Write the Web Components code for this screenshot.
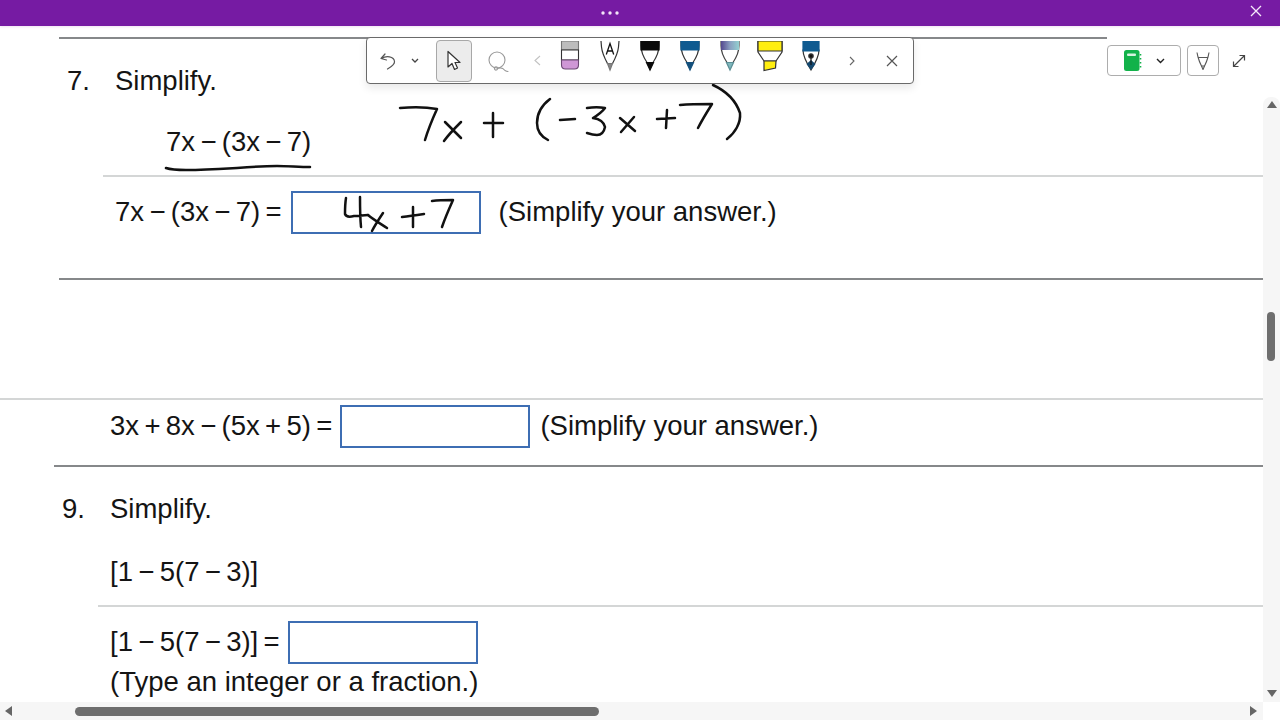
<!DOCTYPE html>
<html lang="en"><head><meta charset="utf-8"><title>Worksheet</title>
<style>html,body{margin:0;padding:0;background:#fff;overflow:hidden}</style></head>
<body>
<app-window>
  <q-rule tone="dark" style="--left:59px;--width:1048px"></q-rule>
  <q-head num="7." style="--left:67px">Simplify.</q-head>
  <q-row style="--left:166px;--h:42px;--after:12px"><math-text>7x − (3x − 7)</math-text></q-row>
  <q-rule style="--left:103px"></q-rule>
  <q-row style="--left:115px;--h:70px;--after:31px;--g1:9px;--g2:18px"><math-text>7x − (3x − 7) =</math-text><answer-box></answer-box><span>(Simplify your answer.)</span></q-row>
  <q-rule tone="dark" style="--left:59px;--after:118px"></q-rule>
  <q-rule style="--left:0px"></q-rule>
  <q-row style="--left:110px;--h:52px;--after:13px;--g1:8px;--g2:10px"><math-text>3x + 8x − (5x + 5) =</math-text><answer-box></answer-box><span>(Simplify your answer.)</span></q-row>
  <q-rule tone="dark" style="--left:54px"></q-rule>
  <q-head num="9." style="--left:62px">Simplify.</q-head>
  <q-row style="--left:110px;--h:42px;--before:2px;--after:12px"><math-text>[1 − 5(7 − 3)]</math-text></q-row>
  <q-rule style="--left:98px"></q-rule>
  <q-row style="--left:110px;--h:40px;--before:15px;--g1:8px"><math-text>[1 − 5(7 − 3)] =</math-text><answer-box></answer-box></q-row>
  <q-row style="--left:110px;--h:40px"><span>(Type an integer or a fraction.)</span></q-row>
</app-window>

<template id="t-app">
<style>
:host{display:grid;grid-template-rows:26px 1fr;width:1280px;height:720px;position:relative;overflow:hidden;background:#fff;
 font:27.5px "Liberation Sans",Arial,sans-serif;color:#141414}
.body{display:grid;grid-template-columns:1fr 17px;grid-template-rows:1fr 18px;min-height:0}
.sheet{overflow:hidden;padding-top:11px;min-height:0}
.corner{background:#fff}
</style>
<title-bar></title-bar>
<div class="body">
  <div class="sheet"><slot></slot></div>
  <v-scroll></v-scroll>
  <h-scroll></h-scroll>
  <div class="corner"></div>
</div>
<ink-layer></ink-layer>
<pen-toolbar></pen-toolbar>
<side-tools></side-tools>
</template>

<template id="t-title">
<style>
:host{display:flex;align-items:center;background:#761ba3;height:26px;box-shadow:0 1px 2px rgba(120,30,160,.12);position:relative;z-index:2}
.dots{flex:1;display:flex;justify-content:center;padding-left:0}
.x{width:60px;display:flex;justify-content:center;padding-left:12px;box-sizing:border-box;margin-top:-5px}
svg{display:block}
</style>
<div class="dots"><svg width="20" height="4" viewBox="0 0 20 4" fill="#f3e6f8"><circle cx="3" cy="2" r="1.7"/><circle cx="10" cy="2" r="1.7"/><circle cx="17" cy="2" r="1.7"/></svg></div>
<div class="x"><svg width="12" height="12" viewBox="0 0 12 12" stroke="#f5e9fa" stroke-width="1.3" fill="none"><path d="M1 1l10 10M11 1L1 11"/></svg></div>
</template>

<template id="t-rule">
<style>
:host{display:block;height:2px;margin-left:var(--left,0);width:var(--width,auto);margin-bottom:var(--after,0);background:#d4d6d6}
:host([tone=dark]){background:#86888a}
</style>
</template>

<template id="t-head">
<style>
:host{display:flex;align-items:center;box-sizing:border-box;height:82px;padding-top:2px;padding-left:var(--left,0)}
.n{width:48px}
</style>
<span class="n"></span><slot></slot>
</template>

<template id="t-row">
<style>
:host{display:flex;align-items:center;height:var(--h,40px);padding-left:var(--left,0);margin-top:var(--before,0);margin-bottom:var(--after,0);white-space:nowrap}
::slotted(answer-box){margin-left:var(--g1,8px);margin-right:var(--g2,10px)}
</style>
<slot></slot>
</template>

<template id="t-math">
<style>:host{display:inline-block;white-space:nowrap;word-spacing:-2.3px}</style>
<slot></slot>
</template>

<template id="t-box">
<style>:host{display:block;flex:none;width:190px;height:43px;box-sizing:border-box;border:2px solid #3e6eb3;background:#fff}</style>
</template>

<template id="t-ink">
<style>:host{position:absolute;left:0;top:0;width:1280px;height:720px;pointer-events:none}svg{display:block}</style>
<svg width="1280" height="720" viewBox="0 0 1280 720" fill="none" stroke="#111" stroke-width="2.5" stroke-linecap="round" stroke-linejoin="round">
  <path d="M400 108C412 107 426 107 437 109C432 120 428 130 425 140"/>
  <path d="M445 122C451 128 456 133 461 138M461 122C455 128 449 134 444 141"/>
  <path d="M484 123C490 123 497 123 503 123M493 113C493 121 493 129 493 137"/>
  <path d="M550 99C542 105 537 114 537 123C537 131 542 137 548 140"/>
  <path d="M560 120L575 119"/>
  <path d="M587 108C593 107 600 107 605 108C602 112 598 115 593 118C599 119 604 122 605 127C604 132 601 135 597 135C593 135 590 134 587 133"/>
  <path d="M620 118L635 131M634 117L621 132"/>
  <path d="M657 119L675 118M667 110L666 128"/>
  <path d="M680 105C691 104 702 104 712 104C707 112 702 120 698 128"/>
  <path d="M713 85C726 91 736 101 740 113C741 123 735 133 727 139"/>
  <path d="M166 168C172 170 178 170 186 170C205 170 220 169 237 168C250 167 264 166 277 166C288 166 299 167 310 167"/>
  <path d="M346 198C345 204 345 209 345 214C346 217 350 217 354 216C359 216 364 215 368 215M360 197C360 207 360 217 361 227"/>
  <path d="M368 215C374 220 381 224 387 228M383 213C379 219 375 225 372 231"/>
  <path d="M402 217C410 216 417 215 424 214M413 207C413 214 413 220 413 227"/>
  <path d="M432 201C439 200 446 200 453 200C449 209 445 218 442 227"/>
</svg>
</template>

<template id="t-bar">
<style>
:host{position:absolute;left:366px;top:37px;width:548px;height:47px;box-sizing:border-box;border:1px solid #6a6a6a;border-radius:4px;background:#fff;
 display:flex;align-items:stretch;padding-left:9px;box-shadow:0 4px 9px rgba(0,0,0,.09)}
.s{display:flex;align-items:center;justify-content:center;flex:none}
svg{display:block}
.sel{width:36px;height:42px;align-self:center;box-sizing:border-box;border:1px solid #a8a8a8;border-radius:4px;background:#ececec;margin:0 14px 0 6px}
.pen{width:40px;align-items:flex-start;padding-top:3px}
</style>
<div class="s" style="width:24px"><svg width="18" height="18" viewBox="0 0 18 18" fill="none" stroke="#555" stroke-width="1.2" stroke-linecap="round" stroke-linejoin="round"><path d="M6 2L2 6.5L7.5 8M2.5 6.5C7 3.5 15 4 15.5 9.5C15.8 12.5 12 15 8.5 17"/></svg></div>
<div class="s" style="width:30px"><svg width="8" height="5" viewBox="0 0 8 5" fill="none" stroke="#444" stroke-width="1.3"><path d="M1 1l3 3l3-3"/></svg></div>
<div class="s sel"><svg width="16" height="22" viewBox="0 0 16 22" fill="#fff" stroke="#333" stroke-width="1.2" stroke-linejoin="round"><path d="M2 1.5L2 17L6 13.5L8.5 19.5L11.5 18L9 12.5L14 12.5Z"/></svg></div>
<div class="s" style="width:24px"><svg width="22" height="22" viewBox="0 0 22 22" fill="none" stroke="#999" stroke-width="1.1" stroke-linecap="round"><circle cx="10" cy="10" r="8"/><circle cx="9" cy="18.5" r="1.6"/><path d="M10.5 18.5C13 17.5 16 18 18 20.5C19 21 20 21.4 21 21.5"/></svg></div>
<div class="s" style="width:24px;margin:0 1px 0 15px"><svg width="7" height="11" viewBox="0 0 7 11" fill="none" stroke="#c2c2c2" stroke-width="1.1"><path d="M6 1L1 5.5L6 10"/></svg></div>
<div class="s pen"><svg width="24" height="32" viewBox="0 0 24 32" stroke="#333" stroke-width="1.1"><path d="M3.5 0H20.5V9H3.5Z" fill="#bdbdbd" stroke="#777"/><path d="M3.5 9H20.5V19H3.5Z" fill="#fff"/><path d="M3.5 19H20.5V24C20.5 27 19 28 16.5 28H7.5C5 28 3.5 27 3.5 24Z" fill="#cf97d6" stroke="#6d4a75"/></svg></div>
<div class="s pen"><svg width="24" height="32" viewBox="0 0 24 32" fill="none" stroke="#333" stroke-width="1.2"><path d="M3 0L3.5 6C4 11 6 16 9.5 22.5H14.5C18 16 20 11 20.5 6L21 0"/><path d="M9.5 22.5L12 29L14.5 22.5Z" fill="#888" stroke="#777"/><path d="M8.3 13.5L12 2.5L15.7 13.5M9.5 10H14.5" stroke="#111" stroke-width="1.3"/></svg></div>
<div class="s pen"><svg width="24" height="32" viewBox="0 0 24 32" stroke="#333" stroke-width="1.2"><path d="M3 0H21V4.5C21 11 18 17 15 21.5H9C6 17 3 11 3 4.5Z" fill="#fff"/><path d="M3 0H21V9H3Z" fill="#0a0a0a" stroke="#0a0a0a"/><path d="M8.5 21.5H15.5L12 29Z" fill="#0a0a0a" stroke="#0a0a0a"/></svg></div>
<div class="s pen"><svg width="24" height="32" viewBox="0 0 24 32" stroke="#333" stroke-width="1.2"><path d="M3 0H21V4.5C21 11 18 17 15 21.5H9C6 17 3 11 3 4.5Z" fill="#fff"/><path d="M3 0H21V9H3Z" fill="#0f5a90" stroke="#0f5a90"/><path d="M8.5 21.5H15.5L12 29Z" fill="#14507c" stroke="#14507c"/></svg></div>
<div class="s pen"><svg width="24" height="32" viewBox="0 0 24 32" stroke="#444" stroke-width="1.2"><defs><linearGradient id="gal" x1="0" x2="1" y1="0" y2="0"><stop offset="0" stop-color="#54488f"/><stop offset=".5" stop-color="#8a9fc0"/><stop offset="1" stop-color="#93d0d0"/></linearGradient></defs><path d="M3 0H21V4.5C21 11 18 17 15 21.5H9C6 17 3 11 3 4.5Z" fill="#fff"/><path d="M3 0H21V9H3Z" fill="url(#gal)" stroke="none"/><path d="M8.5 21.5H15.5L12 29Z" fill="#7fb8bd" stroke="#5b8e95"/></svg></div>
<div class="s pen"><svg width="26" height="32" viewBox="0 0 26 32" stroke="#333" stroke-width="1.2"><path d="M1 0H25V11L19 20H7L1 11Z" fill="#fff"/><path d="M1 0H25V10H1Z" fill="#ffee10" stroke="#333"/><path d="M7 20H19L18.5 27L7 29.5Z" fill="#ffee10"/></svg></div>
<div class="s pen" style="margin-left:1px"><svg width="24" height="32" viewBox="0 0 24 32" stroke="#333" stroke-width="1.2"><path d="M4 9H20C20 15 17 21 12 29C7 21 4 15 4 9Z" fill="#fff"/><path d="M4 0H20V10H4Z" fill="#0f5a90" stroke="#0f5a90"/><path d="M12 19L7.5 23L12 29L16.5 23Z" fill="#14486f" stroke="none"/><path d="M12 15V24" stroke="#111"/><circle cx="12" cy="15" r="2.2" fill="#111"/></svg></div>
<div class="s" style="width:40px;padding-left:2px;box-sizing:border-box"><svg width="6" height="10" viewBox="0 0 6 10" fill="none" stroke="#666" stroke-width="1.1"><path d="M1 1L5 5L1 9"/></svg></div>
<div class="s" style="width:40px;padding-left:2px;box-sizing:border-box"><svg width="12" height="12" viewBox="0 0 12 12" fill="none" stroke="#555" stroke-width="1.2"><path d="M1 1l10 10M11 1L1 11"/></svg></div>
</template>

<template id="t-side">
<style>
:host{position:absolute;left:1107px;top:45px;display:flex;align-items:center;gap:6px;height:31px}
svg{display:block}
.btn{box-sizing:border-box;height:31px;border:1px solid #adadad;border-radius:4px;display:flex;align-items:center;background:#fff}
.nb{width:74px;padding-left:15px;gap:14px}
.pn{width:32px;justify-content:center}
.ex{margin-left:7px}
</style>
<div class="btn nb"><svg width="19" height="21" viewBox="0 0 19 21"><rect x="1" y="0" width="15.5" height="21" rx="2.5" fill="#12b24a"/><rect x="4" y="3.5" width="9" height="2.6" rx="1" fill="#d5f3df"/><path d="M17.5 4v1.5M17.5 8v1.5M17.5 12v1.5M17.5 16v1.5" stroke="#12b24a" stroke-width="1.6"/></svg><svg width="9" height="6" viewBox="0 0 9 6" fill="none" stroke="#222" stroke-width="1.4"><path d="M1 1l3.5 3.5L8 1"/></svg></div>
<div class="btn pn"><svg width="14" height="18" viewBox="0 0 14 18" fill="none" stroke="#555" stroke-width="1.1"><path d="M1 .5L2 5C3 9 4.5 12 5.5 14H8.5C9.5 12 11 9 12 5L13 .5M2 5.5H12"/><path d="M5.5 14L7 17.5L8.5 14"/></svg></div>
<svg class="ex" width="14" height="14" viewBox="0 0 14 14" fill="none" stroke="#444" stroke-width="1.2"><path d="M1.5 12.5L12.5 1.5M7.5 1.5H12.5V6.5M1.5 7.5V12.5H6.5"/></svg>
</template>

<template id="t-vs">
<style>
:host{display:block;position:relative;background:#f6f6f6;margin-top:71px;border-radius:8px 8px 0 0}
.up,.dn{position:absolute;left:4px;width:0;height:0;border-left:5px solid transparent;border-right:5px solid transparent}
.up{top:4px;border-bottom:7px solid #666}
.dn{bottom:5px;border-top:7px solid #666}
.th{position:absolute;left:4px;top:215px;width:8px;height:49px;border-radius:4px;background:#6e6e6e}
</style>
<div class="up"></div><div class="th"></div><div class="dn"></div>
</template>

<template id="t-hs">
<style>
:host{display:block;position:relative;background:#f6f6f6}
.l,.r{position:absolute;top:4px;width:0;height:0;border-top:5px solid transparent;border-bottom:5px solid transparent}
.l{left:5px;border-right:7px solid #666}
.r{right:6px;border-left:7px solid #666}
.th{position:absolute;left:75px;top:5px;width:524px;height:9px;border-radius:4.5px;background:#6e6e6e}
</style>
<div class="l"></div><div class="th"></div><div class="r"></div>
</template>

<script>
function reg(name, tpl, init){
  customElements.define(name, class extends HTMLElement{
    constructor(){super();
      const r=this.attachShadow({mode:'open'});
      r.appendChild(document.getElementById(tpl).content.cloneNode(true));
      if(init) init(this,r);
    }
  });
}
reg('title-bar','t-title');
reg('q-rule','t-rule');
reg('q-head','t-head',(h,r)=>{r.querySelector('.n').textContent=h.getAttribute('num')||''});
reg('q-row','t-row');
reg('math-text','t-math');
reg('answer-box','t-box');
reg('ink-layer','t-ink');
reg('pen-toolbar','t-bar');
reg('side-tools','t-side');
reg('v-scroll','t-vs');
reg('h-scroll','t-hs');
reg('app-window','t-app');
</script>
</body></html>
